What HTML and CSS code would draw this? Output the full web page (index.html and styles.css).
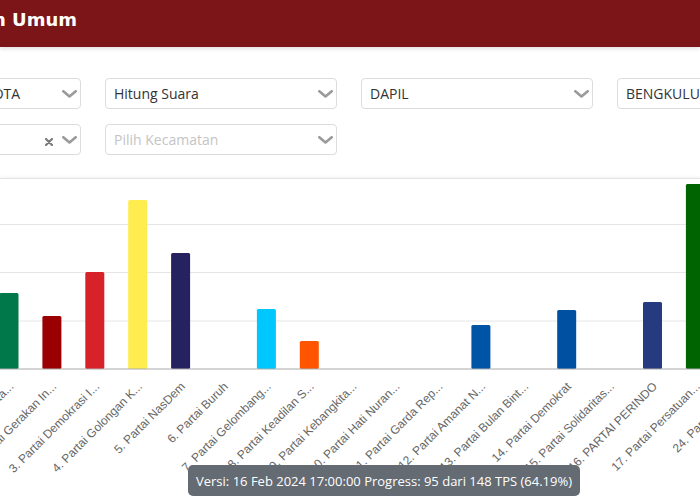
FILE: index.html
```html
<!DOCTYPE html>
<html lang="id">
<head>
<meta charset="utf-8">
<title>Pemilihan Umum</title>
<link rel="stylesheet" href="styles.css">
</head>
<body>
<header class="topbar">
  <div class="title-wrap"><h1 class="title">Pemilihan Umum</h1></div>
</header>

<section class="filters">
  <div class="select"><span class="value">DPRD KABUPATEN/KOTA</span><span class="icons"><svg class="chev" viewBox="0 0 15 8"><path d="M1.3 1.3 L7.5 6.5 L13.7 1.3"/></svg></span></div>
  <div class="select"><span class="value">Hitung Suara</span><span class="icons"><svg class="chev" viewBox="0 0 15 8"><path d="M1.3 1.3 L7.5 6.5 L13.7 1.3"/></svg></span></div>
  <div class="select"><span class="value">DAPIL</span><span class="icons"><svg class="chev" viewBox="0 0 15 8"><path d="M1.3 1.3 L7.5 6.5 L13.7 1.3"/></svg></span></div>
  <div class="select"><span class="value">BENGKULU</span><span class="icons"><svg class="chev" viewBox="0 0 15 8"><path d="M1.3 1.3 L7.5 6.5 L13.7 1.3"/></svg></span></div>
  <div class="select"><span class="value">BENGKULU 1</span><span class="icons"><svg class="clear" viewBox="0 0 8 8"><path d="M1 1 L7 7 M7 1 L1 7"/></svg><svg class="chev" viewBox="0 0 15 8"><path d="M1.3 1.3 L7.5 6.5 L13.7 1.3"/></svg></span></div>
  <div class="select"><span class="value placeholder">Pilih Kecamatan</span><span class="icons"><svg class="chev" viewBox="0 0 15 8"><path d="M1.3 1.3 L7.5 6.5 L13.7 1.3"/></svg></span></div>
</section>

<section class="card">
  <svg class="chart" width="700" height="322" viewBox="0 0 700 322">
    <g class="grid">
      <line x1="0" y1="45.5" x2="700" y2="45.5"/>
      <line x1="0" y1="93.5" x2="700" y2="93.5"/>
      <line x1="0" y1="142" x2="700" y2="142"/>
    </g>
    <g class="bars">
      <rect x="-0.5" y="114" width="19" height="76" rx="1.5" fill="#00784a"/>
      <rect x="42.4" y="137" width="19" height="53" rx="1.5" fill="#9b0000"/>
      <rect x="85.3" y="93" width="19" height="97" rx="1.5" fill="#d8222a"/>
      <rect x="128.2" y="21" width="19" height="169" rx="1.5" fill="#ffed4f"/>
      <rect x="171.1" y="74" width="19" height="116" rx="1.5" fill="#25225f"/>
      <rect x="256.9" y="130" width="19" height="60" rx="1.5" fill="#00c8ff"/>
      <rect x="299.8" y="162" width="19" height="28" rx="1.5" fill="#ff5500"/>
      <rect x="471.4" y="146" width="19" height="44" rx="1.5" fill="#0054a5"/>
      <rect x="557.2" y="131" width="19" height="59" rx="1.5" fill="#0050a2"/>
      <rect x="643" y="123" width="19" height="67" rx="1.5" fill="#263a80"/>
      <rect x="685.9" y="5" width="19" height="185" rx="1.5" fill="#006400"/>
    </g>
    <line class="axis" x1="0" y1="190" x2="700" y2="190"/>
    <g class="labels">
      <text transform="translate(12 206) rotate(-45)">1. Partai Kebangkita...</text>
      <text transform="translate(54.9 206) rotate(-45)">2. Partai Gerakan In...</text>
      <text transform="translate(97.8 206) rotate(-45)">3. Partai Demokrasi I...</text>
      <text transform="translate(140.7 206) rotate(-45)">4. Partai Golongan K...</text>
      <text transform="translate(183.6 206) rotate(-45)">5. Partai NasDem</text>
      <text transform="translate(226.5 206) rotate(-45)">6. Partai Buruh</text>
      <text transform="translate(269.4 206) rotate(-45)">7. Partai Gelombang...</text>
      <text transform="translate(312.3 206) rotate(-45)">8. Partai Keadilan S...</text>
      <text transform="translate(355.2 206) rotate(-45)">9. Partai Kebangkita...</text>
      <text transform="translate(398.1 206) rotate(-45)">10. Partai Hati Nuran...</text>
      <text transform="translate(441 206) rotate(-45)">11. Partai Garda Rep...</text>
      <text transform="translate(483.9 206) rotate(-45)">12. Partai Amanat N...</text>
      <text transform="translate(526.8 206) rotate(-45)">13. Partai Bulan Bint...</text>
      <text transform="translate(569.7 206) rotate(-45)">14. Partai Demokrat</text>
      <text transform="translate(612.6 206) rotate(-45)">15. Partai Solidaritas...</text>
      <text transform="translate(655.5 206) rotate(-45)">16. PARTAI PERINDO</text>
      <text transform="translate(698.4 206) rotate(-45)">17. Partai Persatuan...</text>
      <text transform="translate(741.3 206) rotate(-45)">24. Partai Ummat</text>
    </g>
  </svg>
</section>

<div class="version-badge">Versi: 16 Feb 2024 17:00:00 Progress: 95 dari 148 TPS (64.19%)</div>
</body>
</html>
```

FILE: styles.css
```css
html, body {
  margin: 0;
  padding: 0;
  background: #ffffff;
  overflow: hidden;
  width: 700px;
  height: 500px;
}

body {
  font-family: "Open Sans", "Noto Sans", sans-serif;
  color: #333333;
}

.topbar {
  height: 47px;
  background: #7b1517;
  box-shadow: 0 2px 4px rgba(0, 0, 0, 0.12);
  display: flex;
  align-items: flex-start;
}

.title-wrap {
  width: 77px;
  display: flex;
  justify-content: flex-end;
  white-space: nowrap;
  padding-top: 8px;
}

.title {
  margin: 0;
  font-family: "DejaVu Sans", "Liberation Sans", sans-serif;
  font-weight: 700;
  font-size: 18px;
  line-height: 23px;
  color: #ffffff;
}

.filters {
  display: grid;
  grid-template-columns: repeat(4, 232px);
  column-gap: 24px;
  row-gap: 15px;
  margin-left: -151px;
  margin-top: 31px;
}

.select {
  height: 31px;
  box-sizing: border-box;
  border: 1px solid #dcdcdc;
  border-radius: 4px;
  background: #ffffff;
  display: flex;
  align-items: center;
  justify-content: space-between;
  padding: 0 3px 0 8px;
  font-size: 14px;
  color: #333333;
  white-space: nowrap;
  overflow: hidden;
}

.value.placeholder {
  color: #c4c4c4;
}

.icons {
  display: flex;
  align-items: center;
  gap: 9px;
}

.chev {
  width: 15px;
  height: 8px;
  display: block;
}

.chev path {
  fill: none;
  stroke: #9a9a9a;
  stroke-width: 2.6;
  stroke-linecap: round;
  stroke-linejoin: round;
}

.clear {
  width: 8px;
  height: 8px;
  display: block;
  margin-top: 4px;
}

.clear path {
  fill: none;
  stroke: #7a7a7a;
  stroke-width: 2.2;
  stroke-linecap: round;
}

.card {
  margin-top: 23px;
  border-top: 1px solid #e4e4e4;
  box-shadow: 0 -1px 3px rgba(0, 0, 0, 0.06);
  background: #ffffff;
}

.chart {
  display: block;
}

.grid line {
  stroke: #e6e6e6;
  stroke-width: 1;
}

.axis {
  stroke: #a9a9a9;
  stroke-width: 1.2;
}

.labels text {
  font-family: "Liberation Sans", Arial, sans-serif;
  font-size: 12px;
  fill: #666666;
  text-anchor: end;
  dominant-baseline: middle;
}

.version-badge {
  position: fixed;
  left: 188px;
  top: 465px;
  height: 31px;
  box-sizing: border-box;
  padding: 0 8px;
  display: flex;
  align-items: center;
  background: #646b73;
  color: #ffffff;
  border-radius: 5px;
  font-size: 13px;
  white-space: nowrap;
}
```
